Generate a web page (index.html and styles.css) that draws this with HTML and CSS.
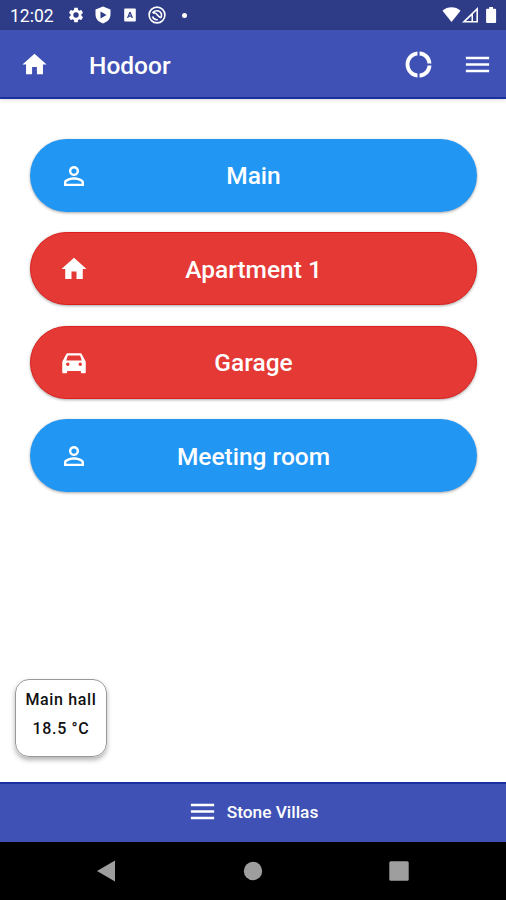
FILE: index.html
```
<!DOCTYPE html>
<html lang="en">
<head>
 <meta charset="utf-8" />
 <title>Hodoor</title>
 <link rel="stylesheet" href="styles.css">
</head>

<body>
 <svg class="defs">
  <symbol id="home" viewBox="0 0 24 24"><path d="M10 20v-6h4v6h5v-8h3L12 3 2 12h3v8z"/></symbol>
  <symbol id="menu" viewBox="0 0 24 24"><path d="M3 18h18v-2H3v2zm0-5h18v-2H3v2zm0-7v2h18V6H3z"/></symbol>
  <symbol id="person" viewBox="0 0 24 24"><path d="M12 5.9a2.1 2.1 0 1 1 0 4.2 2.1 2.1 0 0 1 0-4.2m0 9c2.97 0 6.1 1.46 6.1 2.1v1.1H5.9V17c0-.64 3.13-2.1 6.1-2.1M12 4C9.79 4 8 5.79 8 8s1.79 4 4 4 4-1.79 4-4-1.79-4-4-4zm0 9c-2.67 0-8 1.34-8 4v3h16v-3c0-2.66-5.33-4-8-4z"/></symbol>
 </svg>

 <div class="status">
  <span class="clock">12:02</span>
  <svg class="gear" viewBox="0 0 24 24"><path d="M19.14 12.94c.04-.3.06-.61.06-.94 0-.32-.02-.64-.07-.94l2.03-1.58c.18-.14.23-.41.12-.61l-1.92-3.32c-.12-.22-.37-.29-.59-.22l-2.39.96c-.5-.38-1.03-.7-1.62-.94l-.36-2.54c-.04-.24-.24-.41-.48-.41h-3.84c-.24 0-.43.17-.47.41l-.36 2.54c-.59.24-1.13.57-1.62.94l-2.39-.96c-.22-.08-.47 0-.59.22L2.74 8.87c-.12.21-.08.47.12.61l2.03 1.58c-.05.3-.09.63-.09.94s.02.64.07.94l-2.03 1.58c-.18.14-.23.41-.12.61l1.92 3.32c.12.22.37.29.59.22l2.39-.96c.5.38 1.03.7 1.62.94l.36 2.54c.05.24.24.41.48.41h3.84c.24 0 .44-.17.47-.41l.36-2.54c.59-.24 1.13-.56 1.62-.94l2.39.96c.22.08.47 0 .59-.22l1.92-3.32c.12-.22.07-.47-.12-.61l-2.01-1.58zM12 15.6A3.6 3.6 0 1 1 12 8.4a3.6 3.6 0 0 1 0 7.2z"/></svg>
  <svg class="shield" viewBox="0 0 16 18"><path fill-rule="evenodd" d="M8 .5L.5 3.5v5c0 4.500 3.200 7.500 7.500 9 4.300-1.500 7.500-4.500 7.500-9v-5zM5.500 5.500v7l6-3.500z"/></svg>
  <svg class="abox" viewBox="0 0 12 14"><path fill-rule="evenodd" d="M1 .5h10a.8.8 0 0 1 .8.8v11.400a.8.8 0 0 1-.8.8H1a.8.800 0 0 1-.8-.8V1.300A.8.8 0 0 1 1 .5zM5.300 4L3 10h1.300l.4-1.300h2.600l.4 1.300H9L6.700 4zM6 5.500l.7 2.100H5.300z"/></svg>
  <svg class="sync" viewBox="0 0 18 18"><g fill="none" stroke="#fff" stroke-width="1.600"><circle cx="9" cy="9" r="7.900"/><path d="M4.500 7C6.500 3.700 12 3.900 13.400 8c.5 1.600.1 3-.7 4M4.500 10.500c.8 2.300 3 3.500 5.300 3.200M5 7.300c2-.8 3.300.2 4.200 1.500s2 2.200 3.600 3"/></g></svg>
  <span class="dot"></span>
  <svg class="signals" viewBox="0 0 56 18"><path d="M.5 4.800C5.500.2 13.500.2 18.500 4.800L9.500 16z"/><path fill-rule="evenodd" d="M20 16.500L36 1v15.500zM24 15h5.500V9.700zM31 8v7h3.400V4.700z"/><path d="M47.200 1h3.800v1.700h2.200c.5 0 .9.4.9.9v12.500c0 .5-.4.9-.9.9H45c-.5 0-.9-.4-.9-.9V3.600c0-.5.4-.9.9-.9h2.200z"/></svg>
 </div>

 <header class="topbar">
  <svg class="home-btn"><use href="#home"/></svg>
  <h1>Hodoor</h1>
  <svg class="donut" viewBox="0 0 24 24"><path d="M11.200 5.080V2C6 2.300 2 6.810 2 12s4 9.700 9.200 10v-3.080C7.500 18.500 5 15.520 5 12s2.500-6.500 6.200-6.920zM18.970 11.300H22C21.700 6 18 2.300 12.800 2v3.080c3.400.3 5.900 3 6.170 6.220zM12.800 18.920V22c5.200-.3 8.900-4 9.200-9.300h-3.030c-.27 3.200-2.770 5.900-6.170 6.220z"/></svg>
  <svg class="menu-btn"><use href="#menu"/></svg>
 </header>

 <main>
  <button class="door blue"><svg><use href="#person"/></svg><span>Main</span></button>
  <button class="door red"><svg><use href="#home"/></svg><span>Apartment 1</span></button>
  <button class="door red">
   <svg viewBox="0 0 24 24"><path fill-rule="evenodd" d="M18.400 5.200c-.3-.7-.9-1.100-1.600-1.100H7.200c-.7 0-1.300.4-1.600 1.100L2.600 11v8.300c0 .5.400.9.900.9h2.100c.5 0 .9-.4.900-.9v-.9h11v.9c0 .5.400.9.900.9h2.100c.5 0 .9-.4.900-.9V11zM7 14.400a1.400 1.400 0 1 1 0-2.800 1.400 1.400 0 0 1 0 2.800zm10 0a1.400 1.400 0 1 1 0-2.800 1.400 1.400 0 0 1 0 2.800zM5.800 10l1.300-4.100h9.800l1.300 4.100z"/></svg>
   <span>Garage</span>
  </button>
  <button class="door blue"><svg><use href="#person"/></svg><span>Meeting room</span></button>

  <div class="sensor">
   <div>Main hall</div>
   <div>18.5 °C</div>
  </div>
 </main>

 <footer class="bottombar">
  <svg><use href="#menu"/></svg>
  <span>Stone Villas</span>
 </footer>

 <nav class="navbar">
  <svg viewBox="0 0 20 22"><path d="M1 11L19 .5v21z"/></svg>
  <svg viewBox="0 0 20 22"><circle cx="10" cy="11" r="9.200"/></svg>
  <svg viewBox="0 0 20 22"><rect x=".3" y="1.300" width="19.400" height="19.400" rx="1.500"/></svg>
 </nav>
</body>
</html>
```
FILE: styles.css
```
* {
 box-sizing: border-box;
 margin: 0;
 padding: 0;
}
body {
 height: 900px;
 display: flex;
 flex-direction: column;
 font-family: Roboto, sans-serif;
 font-weight: 500;
 color: #fff;
 background: #fff;
 overflow: hidden;
}
svg {
 display: block;
 flex: none;
 fill: #fff;
}
.defs {
 display: none;
}
.status {
 height: 30px;
 display: flex;
 align-items: center;
 padding: 0 8px 0 10px;
 background: #2e3c88;
}
.clock {
 width: 57px;
 font-size: 17.5px;
 font-weight: 400;
 padding-top: 2px;
}
.gear {
 width: 18px;
 height: 18px;
}
.shield {
 width: 16px;
 height: 18px;
 margin-left: 10px;
}
.abox {
 width: 12px;
 height: 14px;
 margin-left: 13px;
}
.sync {
 width: 18px;
 height: 18px;
 margin-left: 12px;
}
.dot {
 width: 5px;
 height: 5px;
 margin-left: 16px;
 border-radius: 50%;
 background: #fff;
}
.signals {
 width: 56px;
 height: 18px;
 margin-left: auto;
}
.topbar {
 height: 69px;
 display: flex;
 align-items: center;
 padding: 2px 13px 0 20px;
 background: #3f51b5;
 border-bottom: 2px solid #1a309f;
 box-shadow: 0 1px 4px rgba(0,0,0,.15);
}
.home-btn {
 width: 29px;
 height: 29px;
}
h1 {
 margin-left: 40px;
 padding-top: 1px;
 font-size: 24.5px;
 font-weight: 500;
}
.donut {
 width: 31px;
 height: 31px;
 margin-left: auto;
}
.menu-btn {
 width: 31px;
 height: 31px;
 margin-left: 28px;
}
main {
 flex: 1;
 display: flex;
 flex-direction: column;
 gap: 20.5px;
 padding: 39.5px 29px 25px 30px;
}
.door {
 height: 73px;
 display: grid;
 grid-template-columns: 31px 1fr 31px;
 align-items: center;
 padding: 1px 29px 0;
 border: none;
 border-radius: 37px;
 font: 500 24.5px Roboto, sans-serif;
 color: #fff;
 box-shadow: 0 1px 3px rgba(0,0,0,.35);
}
.door svg {
 width: 30px;
 height: 30px;
}
.blue {
 background: #2196f3;
}
.red {
 background: #e53935;
 border: 1px solid #dc1f1c;
 padding: 1px 28px 0;
}
.sensor {
 width: 92px;
 height: 78px;
 margin: auto 0 0 -15px;
 padding-top: 5px;
 border: 1px solid #999;
 border-radius: 14px;
 box-shadow: 0 3px 5px rgba(0,0,0,.3);
 text-align: center;
 font-size: 16px;
 line-height: 29px;
 letter-spacing: .65px;
 color: #111;
}
.bottombar {
 height: 60px;
 display: flex;
 align-items: center;
 justify-content: center;
 gap: 9px;
 padding: 0 1px 3px 0;
 background: #3f51b5;
 border-top: 2px solid #1a309f;
 font-size: 17.3px;
}
.bottombar svg {
 width: 31px;
 height: 31px;
}
.navbar {
 height: 58px;
 display: flex;
 align-items: center;
 justify-content: space-between;
 padding: 0 97px 0 96px;
 background: #000;
}
.navbar svg {
 width: 20px;
 height: 22px;
 fill: #9e9e9e;
}
```
